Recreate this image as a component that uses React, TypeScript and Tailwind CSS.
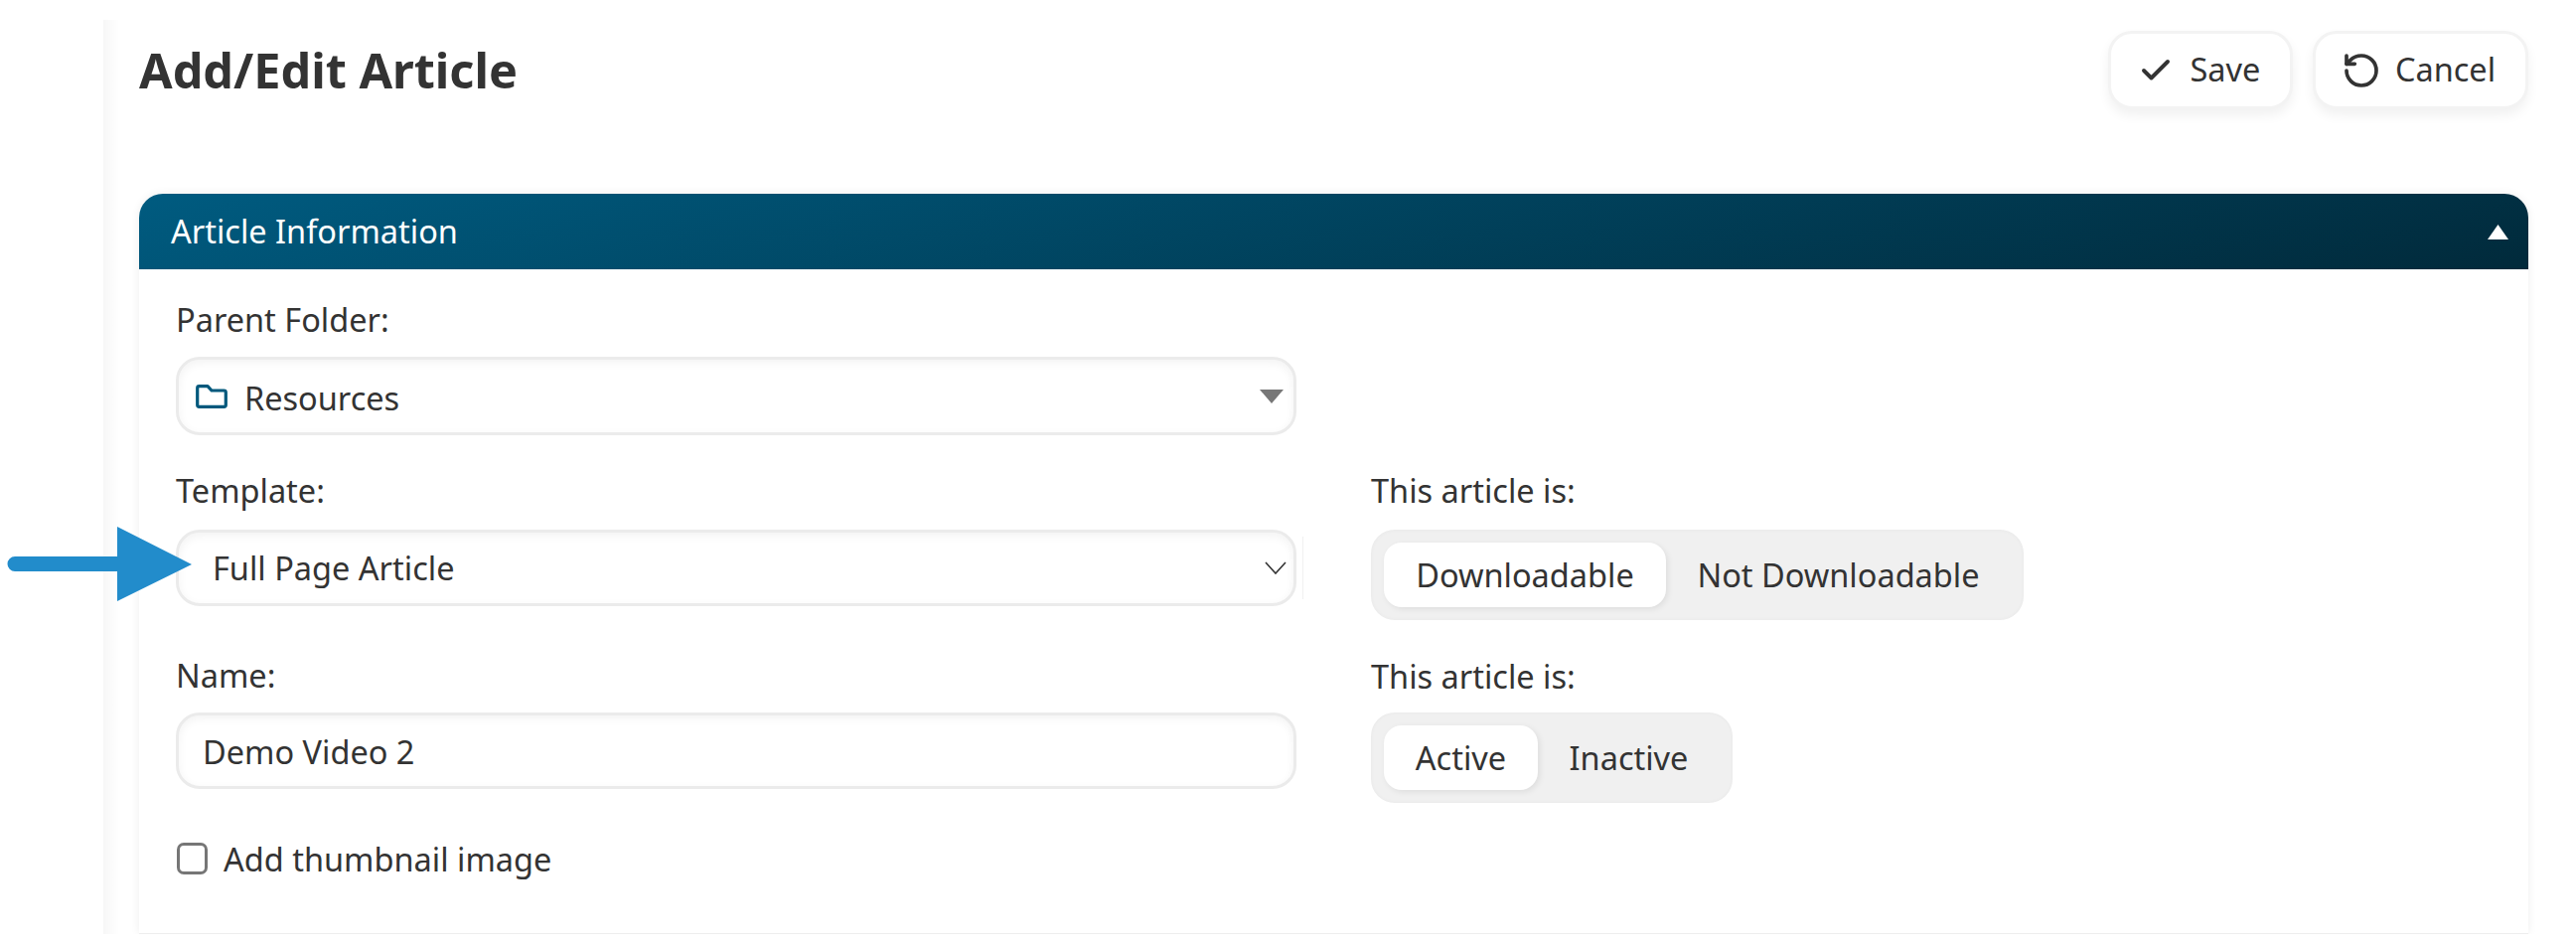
import React from 'react';
import { Check, RotateCcw } from 'lucide-react';

const font = { fontFamily: '"Noto Sans", sans-serif' };

function Segmented({ options, widths }: { options: string[]; widths: string[] }) {
  return (
    <div className="inline-flex h-[91px] w-fit items-center rounded-[24px] bg-[#f0f0f0] px-[13px] shadow-[inset_0_0_4px_rgba(0,0,0,0.04)]">
      {options.map((o, i) => (
        <div
          key={o}
          className={
            'flex h-[65px] items-center justify-center rounded-[18px] pt-[1px] text-[32.5px] text-[#333] ' +
            widths[i] +
            (i === 0 ? ' bg-white shadow-[2px_2px_6px_rgba(0,0,0,0.08)]' : '')
          }
        >
          {o}
        </div>
      ))}
    </div>
  );
}

const fieldClass =
  'flex w-full items-center rounded-[24px] border-[3px] border-[#ebebeb] bg-white text-[32.5px] text-[#333] shadow-[inset_0_3px_10px_rgba(0,0,0,0.05)]';

export default function App() {
  return (
    <div className="relative h-[952px] w-[2593px] overflow-hidden bg-white text-[#333]" style={font}>
      {/* arrow pointing at the template select */}
      <svg className="absolute left-0 top-[520px] z-10" width="200" height="95" viewBox="0 0 200 95">
        <path d="M118 10 L193 48 L118 85 L118 55 L15 55 A7.5 7.5 0 0 1 15 40 L118 40 Z" fill="#228ccb" />
      </svg>

      <div className="ml-[104px] mt-5 h-[920px] overflow-hidden bg-gradient-to-r from-[#f7f7f7] to-white to-[16px] pl-9 pr-12">
        <div className="flex h-[175px] items-start justify-between">
          <h1 className="mt-[15px] text-[48.6px] font-bold leading-[70px] text-[#333]">Add/Edit Article</h1>
          <div className="mt-[11px] flex gap-5">
            <button className="flex h-[79px] w-[186px] items-center justify-center gap-[17px] rounded-[24px] border-[3px] border-[#f3f3f3] bg-white pr-[3px] text-[32.5px] shadow-[0_6px_12px_rgba(0,0,0,0.06)]">
              <Check size={36} strokeWidth={2.6} />
              Save
            </button>
            <button className="flex h-[79px] w-[217px] items-center justify-center gap-[14px] rounded-[24px] border-[3px] border-[#f3f3f3] bg-white pr-[4px] text-[32.5px] shadow-[0_6px_12px_rgba(0,0,0,0.06)]">
              <RotateCcw size={40} strokeWidth={2.2} />
              Cancel
            </button>
          </div>
        </div>

        <section className="h-[745px] rounded-t-[24px] border-b border-[#eee] shadow-[0_0_10px_rgba(0,0,0,0.07)]">
          <header className="flex h-[76px] items-center justify-between rounded-t-[24px] bg-[linear-gradient(165deg,#005b80,#012a3b)] pl-8 pr-5 text-white">
            <span className="text-[32.5px]">Article Information</span>
            <svg width="21" height="15" viewBox="0 0 21 15">
              <path d="M10.5 0 L21 15 L0 15 Z" fill="#fff" />
            </svg>
          </header>

          <div className="pl-[37px] pr-[38px] pt-[29px]">
            <div className="w-[1128px]">
              <label className="block text-[32.5px] leading-[44px]">Parent Folder:</label>
              <div className={fieldClass + ' mt-[15px] h-[79px] justify-between pl-[17px] pr-[10px]'}>
                <span className="flex items-center gap-[17px]">
                  <svg width="32" height="24" viewBox="0 0 32 24" fill="none" stroke="#00587c" strokeWidth="3.2" strokeLinejoin="round">
                    <path d="M3.5 1.7 H12 L16 6 H28.5 Q30.3 6 30.3 7.8 V20.5 Q30.3 22.3 28.5 22.3 H3.5 Q1.7 22.3 1.7 20.5 V3.5 Q1.7 1.7 3.5 1.7 Z" />
                  </svg>
                  <span className="pt-[6px]">Resources</span>
                </span>
                <svg width="24" height="14" viewBox="0 0 24 14">
                  <path d="M0 0 L24 0 L12 14 Z" fill="#777" />
                </svg>
              </div>
            </div>

            <div className="mt-[34px] flex gap-[75px]">
              <div className="w-[1128px]">
                <label className="block text-[32.5px] leading-[44px]">Template:</label>
                <div className="relative mt-[17px]">
                  <div className={fieldClass + ' h-[77px] justify-between pl-[34px] pr-[7px]'}>
                    <span className="pt-[2px]">Full Page Article</span>
                    <svg width="22" height="13" viewBox="0 0 22 13" fill="none" stroke="#333" strokeWidth="1.6">
                      <path d="M1 1 L11 12 L21 1" />
                    </svg>
                  </div>
                  <div className="absolute -right-[7px] top-[7px] h-[63px] w-px bg-[#f0f0f0]" />
                </div>
              </div>
              <div>
                <label className="block text-[32.5px] leading-[44px]">This article is:</label>
                <div className="mt-[17px]">
                  <Segmented options={['Downloadable', 'Not Downloadable']} widths={['w-[284px]', 'w-[347px]']} />
                </div>
              </div>
            </div>

            <div className="mt-[-1px] flex gap-[75px]">
              <div className="w-[1128px] pt-[35px]">
                <label className="block text-[32.5px] leading-[44px]">Name:</label>
                <div className={fieldClass + ' mt-[15px] h-[77px] pl-[24px]'}>
                  <span className="pt-[4px]">Demo Video 2</span>
                </div>
                <label className="ml-px mt-[47px] flex items-center gap-4">
                  <span className="h-[32px] w-[31px] rounded-[7px] border-[3px] border-[#767676] bg-white" />
                  <span className="pt-[2px] text-[32.5px] leading-[44px]">Add thumbnail image</span>
                </label>
              </div>
              <div className="pt-[36px]">
                <label className="block text-[32.5px] leading-[44px]">This article is:</label>
                <div className="mt-[14px]">
                  <Segmented options={['Active', 'Inactive']} widths={['w-[155px]', 'w-[183px]']} />
                </div>
              </div>
            </div>
          </div>
        </section>
      </div>
    </div>
  );
}
